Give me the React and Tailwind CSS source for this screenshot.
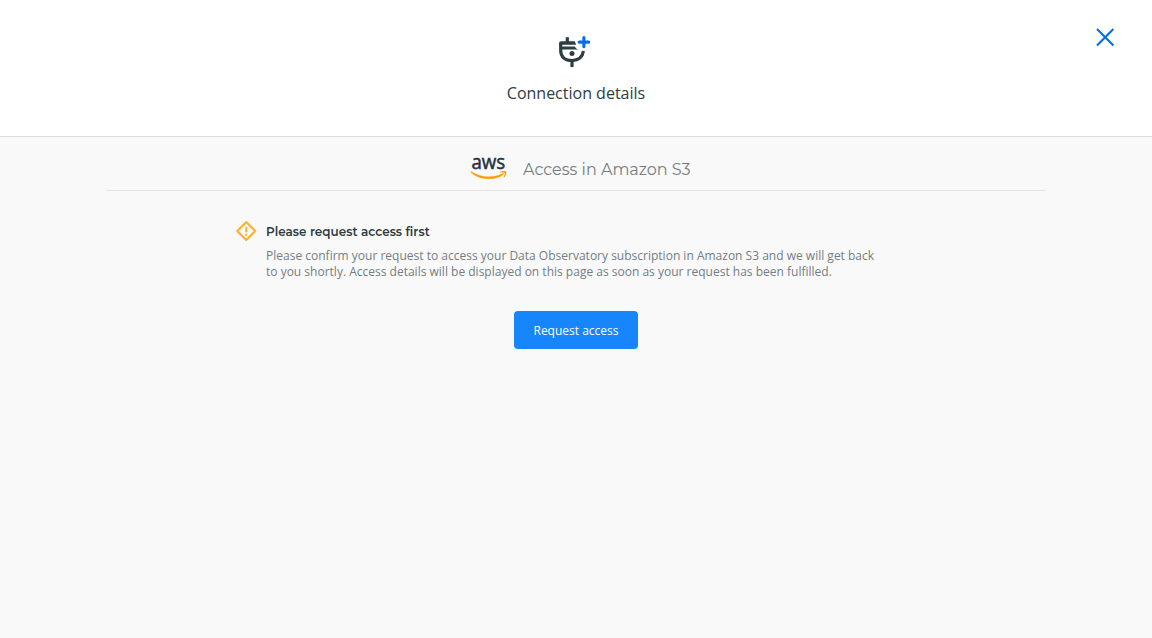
function ConnectionIcon() {
  return (
    <svg width="32" height="32" viewBox="0 0 32 32" fill="none" className="mr-1 block">
      <g stroke="#2c3e42" strokeWidth="3.2">
        <path d="M9.3 1.2v6" />
        <path d="M2.7 7V14.4C2.7 21 7.3 24.5 14 24.5S24.7 20.6 25.4 15" />
        <path d="M14 24.5v6.6" />
      </g>
      <path d="M3.3 5.3h13.4l1.5 3.5H1.1V7.5c0-1.3.9-2.2 2.2-2.2ZM3.5 10.6h13.4c.6 1.6 1.8 2.4 3.6 3H3.5Z" fill="#2c3e42" />
      <circle cx="14" cy="17.6" r="2.5" fill="#2c3e42" />
      <path d="M25.9 1.6v9M21.2 6.1h9.4" stroke="#036fe2" strokeWidth="3.1" strokeLinecap="round" />
    </svg>
  );
}

function AwsLogo() {
  return (
    <svg width="37" height="30" viewBox="-1 -4 37 30" overflow="visible" className="block shrink-0">
      <text x="0.4" y="14.4" textLength="33.8" lengthAdjust="spacingAndGlyphs" fill="#252f3e" stroke="#252f3e" strokeWidth="0.5" className="font-['Open_Sans',sans-serif] text-[20px]">
        aws
      </text>
      <path d="M.4 16.7C9 22.3 21.5 23.6 31.8 18.4c.7-.3 1.2.5.5 1C24.4 25.8 9.1 25.5 0 17.4c-.5-.5-.1-1 .4-.7Z" fill="#ff9900" stroke="#ff9900" strokeWidth=".3" />
      <path d="M29.2 16.8c1.6-1.2 5.5-1.1 6-.4.5.8-.3 4.4-2 6-.4.3-.7.1-.5-.3.5-1.2 1.4-3.7.9-4.2-.5-.6-2.9-.4-4.1-.3-.5.1-.7-.4-.3-.8Z" fill="#ff9900" />
    </svg>
  );
}

function WarningIcon() {
  return (
    <svg width="22" height="22" viewBox="0 0 22 22" fill="none" className="block shrink-0">
      <path d="M11.3 2 20.2 11l-8.9 9L2.3 11Z" stroke="#fdb22b" strokeWidth="2.1" strokeLinejoin="round" />
      <path d="M11.3 6.8v5.4M11.3 13.7v2" stroke="#fdb22b" strokeWidth="2" />
    </svg>
  );
}

export default function App() {
  return (
    <div className="min-h-screen bg-[#f9f9f9] font-['Open_Sans',sans-serif]">
      <header className="relative flex h-[137px] flex-col items-center border-b border-[#dddddd] bg-white pt-9">
        <ConnectionIcon />
        <h1 className="mt-[13px] text-base leading-6 text-[#2e3c43]">Connection details</h1>
        <button aria-label="Close" className="absolute top-7 right-[37px] cursor-pointer">
          <svg width="20" height="20" viewBox="0 0 20 20" className="block">
            <path d="m2 1 16.4 16.6M18.4 1 2 17.6" stroke="#036fe2" strokeWidth="2.1" fill="none" />
          </svg>
        </button>
      </header>
      <main className="flex flex-col items-center">
        <div className="flex h-[54px] w-[940px] justify-center gap-4 border-b border-[#e2e4e5] pt-[14px] pl-[9px]">
          <AwsLogo />
          <h2 className="mt-[5px] w-[168px] font-['Montserrat',sans-serif] text-base leading-7 whitespace-nowrap text-[#747d82]">
            Access in Amazon S3
          </h2>
        </div>
        <section className="mt-[29px] flex w-[682px] gap-[9px]">
          <WarningIcon />
          <div>
            <h3 className="mt-px font-['Montserrat',sans-serif] text-xs leading-[22px] font-semibold tracking-[0.03px] text-[#2e3c43]">
              Please request access first
            </h3>
            <p className="mt-[5px] text-xs leading-4 tracking-[0.004px] whitespace-nowrap text-[#747d82]">
              Please confirm your request to access your Data Observatory subscription in Amazon S3 and we will get back
              <br />
              to you shortly. Access details will be displayed on this page as soon as your request has been fulfilled.
            </p>
          </div>
        </section>
        <button className="mt-[31px] h-[38px] w-[124px] rounded bg-[#1785fb] pt-0.5 text-xs leading-4 text-white">
          Request access
        </button>
      </main>
    </div>
  );
}
